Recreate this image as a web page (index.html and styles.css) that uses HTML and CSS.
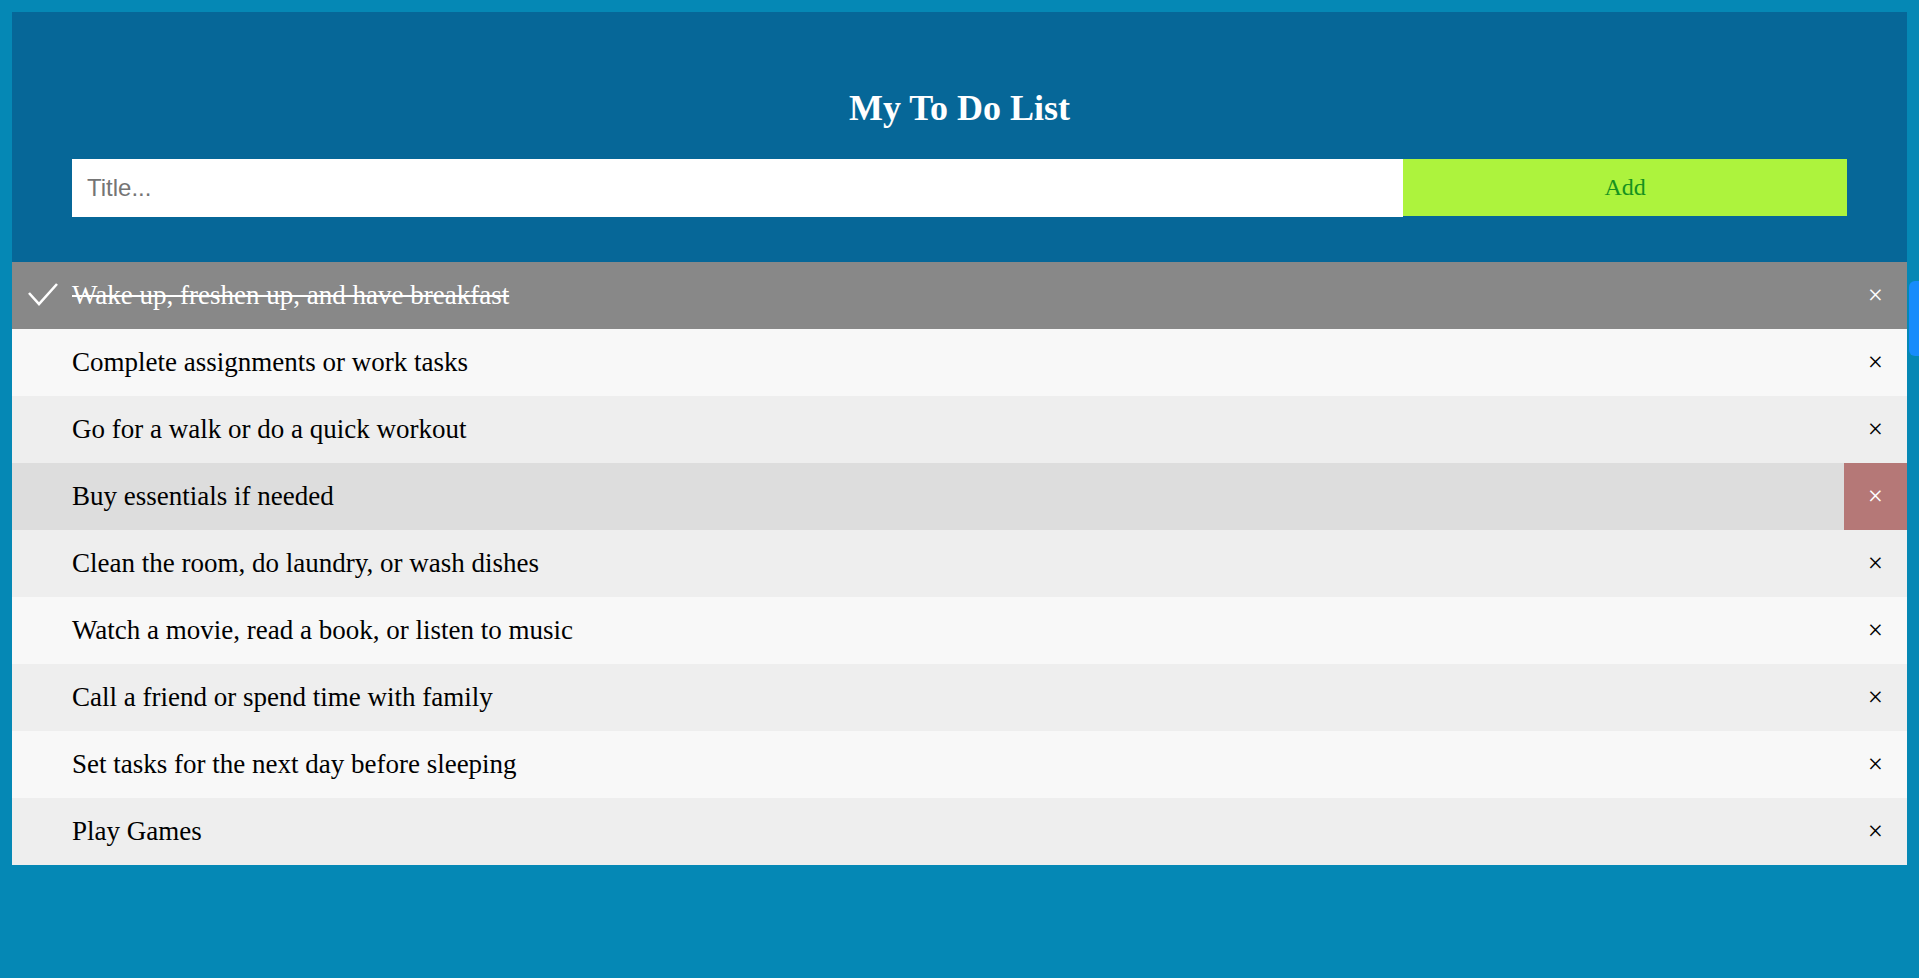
FILE: index.html
```html
<!DOCTYPE html>
<html>
<head>
<meta charset="utf-8">
<title>My To Do List</title>
<link rel="stylesheet" href="styles.css">
</head>
<body>
<div class="app">
  <div class="header">
    <h2 class="title">My To Do List</h2>
    <div class="form">
      <input class="field" type="text" placeholder="Title...">
      <span class="add-btn">Add</span>
    </div>
  </div>
  <ul class="list">
    <li class="item checked">
      <svg class="check" width="34" height="30" viewBox="0 0 34 30"><polyline points="5,15 15,26 33,6" fill="none" stroke="#fff" stroke-width="2.6"/></svg>
      Wake up, freshen up, and have breakfast<span class="close">×</span></li>
    <li class="item light">Complete assignments or work tasks<span class="close">×</span></li>
    <li class="item dark">Go for a walk or do a quick workout<span class="close">×</span></li>
    <li class="item hover">Buy essentials if needed<span class="close close-hover">×</span></li>
    <li class="item dark">Clean the room, do laundry, or wash dishes<span class="close">×</span></li>
    <li class="item light">Watch a movie, read a book, or listen to music<span class="close">×</span></li>
    <li class="item dark">Call a friend or spend time with family<span class="close">×</span></li>
    <li class="item light">Set tasks for the next day before sleeping<span class="close">×</span></li>
    <li class="item dark">Play Games<span class="close">×</span></li>
  </ul>
</div>
<div class="side-thumb"></div>
</body>
</html>
```
FILE: styles.css
```css
* { box-sizing: border-box; }
html, body {
  background: #0588b5;
}
body {
  margin: 12px;
  font-family: "Liberation Serif", "Times New Roman", serif;
}
.app {
  display: flex;
  flex-direction: column;
}
.header {
  background: #066798;
  padding: 45px 60px;
  color: #fff;
  text-align: center;
}
.title {
  margin: 30px 0;
  font-size: 36px;
  line-height: 42px;
  font-weight: bold;
}
.form {
  display: flex;
  align-items: flex-start;
}
.field {
  width: 75%;
  margin: 0;
  border: none;
  border-radius: 0;
  outline: none;
  padding: 15px;
  height: 58px;
  font-family: "Liberation Sans", Arial, sans-serif;
  font-size: 24px;
  line-height: 28px;
  color: #000;
  background: #fff;
}
.field::placeholder { color: #757575; }
.add-btn {
  width: 25%;
  height: 57px;
  padding: 15px;
  background: #adf33d;
  color: #16921f;
  font-size: 24px;
  line-height: 27px;
  text-align: center;
}
.list {
  margin: 0;
  padding: 0;
  list-style: none;
}
.item {
  position: relative;
  padding: 18px 12px 18px 60px;
  font-size: 27px;
  line-height: 31px;
  color: #000;
}
.light { background: #f8f8f8; }
.dark { background: #eeeeee; }
.hover { background: #dddddd; }
.checked {
  background: #888888;
  color: #fff;
  text-decoration: line-through;
}
.check {
  position: absolute;
  left: 12px;
  top: 16px;
}
.close {
  position: absolute;
  right: 0;
  top: 0;
  height: 67px;
  padding: 18px 24px;
  font-size: 27px;
  line-height: 31px;
  text-decoration: none;
}
.checked .close { color: #fff; }
.close-hover {
  background: #b57877;
  color: #fff;
}
.side-thumb {
  position: absolute;
  right: 0;
  top: 281px;
  width: 10px;
  height: 75px;
  background: #178cfb;
  border-radius: 6px 0 0 6px;
}
```
